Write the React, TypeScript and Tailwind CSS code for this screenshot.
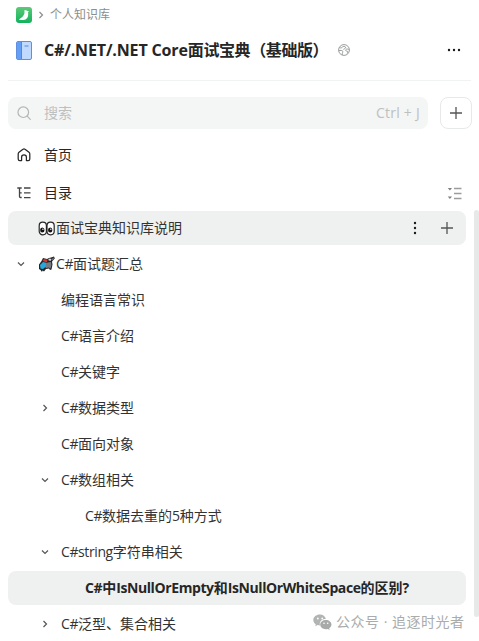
import type { ReactNode } from "react";
import clsx from "clsx";

type TreeItem = {
  label: string;
  level: 0 | 1 | 2;
  icon?: ReactNode;
  state?: "open" | "closed";
  highlighted?: boolean;
  bold?: boolean;
  actions?: boolean;
};

function LogoIcon() {
  return (
    <svg width="16" height="16" viewBox="0 0 16 16">
      <defs>
        <linearGradient id="logo" x1="0" y1="0" x2="0" y2="1">
          <stop offset="0" stopColor="#5cc978" />
          <stop offset="1" stopColor="#12b25d" />
        </linearGradient>
      </defs>
      <rect width="16" height="16" rx="3" fill="url(#logo)" />
      <path
        d="M8.200 3.500C9.300 3 10.800 3.200 11.500 4L13 4.300C12.200 4.800 12 5.300 12.100 6C12.700 9.800 10.700 13 7.300 13C5.600 13 4 12.900 2.800 12.400C5.200 11.300 7.800 8.800 8.400 6.500C8.700 5.300 8.500 4.300 8.200 3.500Z"
        fill="#fff"
      />
    </svg>
  );
}

function BookIcon() {
  return (
    <svg width="16" height="19" viewBox="0 0 16 19">
      <rect x=".5" y=".5" width="15" height="18" rx="1.5" fill="#bfd9ff" stroke="#5f8fdf" />
      <path d="M1 1.5A.5.5 0 0 1 1.5 1H5v17H1.5a.5.5 0 0 1-.5-.5Z" fill="#659ff5" />
      <path d="M5.5 1v17M8.5 5h4" stroke="#5486dc" fill="none" />
    </svg>
  );
}

function GlobeIcon() {
  return (
    <svg width="12" height="12" viewBox="0 0 12 12" fill="none" stroke="#8f9292" strokeWidth=".9">
      <circle cx="6" cy="6" r="5.4" />
      <path d="M1.500 3.700c1.500.4 2.500.2 2.700-.6.3-.8 2.800-1 3.400.1.600 1.200-1.500 1.600-2.200 2.200M11.300 5.800c-1-.9-2.900-1.100-3.500-.2-.5.9.4 1.500 1.200 1.500 1 .1.700 1.300.1 2.300M.8 6.700c1.500-.5 3.500-.4 4 .6.4 1-.9 1.700-.5 3.600" />
    </svg>
  );
}

function SearchIcon() {
  return (
    <svg width="14" height="14" viewBox="0 0 14 14" fill="none" stroke="#b3b6b5" strokeWidth="1.2">
      <circle cx="6.3" cy="6.2" r="5.3" />
      <path d="m10.2 10.2 3.1 3.1" strokeLinecap="round" />
    </svg>
  );
}

function HomeIcon() {
  return (
    <svg width="14" height="14" viewBox="0 0 14 14" fill="none" stroke="#262626" strokeWidth="1.25" strokeLinejoin="round">
      <path d="M1.2 5.9c0-.7.3-1.3.8-1.7L6 1.2c.6-.5 1.4-.5 2 0l4 3c.5.4.8 1 .8 1.7v5c0 .9-.7 1.600-1.600 1.600H9.400V9.200c0-3-4.800-3-4.800 0v3.300H2.800c-.9 0-1.600-.7-1.600-1.600Z" />
    </svg>
  );
}

function CatalogIcon() {
  return (
    <svg width="14" height="12" viewBox="0 0 14 12" fill="none" stroke="#444" strokeWidth="1.3">
      <path d="M.3 1h4.400M2.500 1v8.500q0 1 1 1h1.200M2.500 5.800h2.200M7 1h6.500M7 5.800h6.500M7 10.600h6.500" />
    </svg>
  );
}

function CollapseIcon() {
  return (
    <svg width="15" height="13" viewBox="0 0 15 13">
      <path d="M.8 1h4.200L2.900 3.500ZM.8 9.500h4.200L2.900 12Z" fill="#7d7f7e" />
      <path d="M7 1.500h7.500M7 6.500h7.500M7 11.500h7.500" stroke="#9b9d9c" strokeWidth="1.3" />
    </svg>
  );
}

function PlusIcon() {
  return (
    <svg width="12" height="12" viewBox="0 0 12 12" stroke="#555" strokeWidth="1.3">
      <path d="M6 0v12M0 6h12" />
    </svg>
  );
}

function DotsIcon({ vertical = false }: { vertical?: boolean }) {
  return (
    <svg width="14" height="14" viewBox="0 0 14 14" fill="#1a1a1a" className={clsx(vertical && "rotate-90")}>
      <circle cx="2" cy="7" r="1.2" />
      <circle cx="7" cy="7" r="1.2" />
      <circle cx="12" cy="7" r="1.2" />
    </svg>
  );
}

function Chevron({ open = false, className = "text-[#555]" }: { open?: boolean; className?: string }) {
  return (
    <svg
      width="8"
      height="8"
      viewBox="0 0 8 8"
      fill="none"
      stroke="currentColor"
      strokeWidth="1.2"
      className={className}
    >
      <path d={open ? "M1 2.5 4 5.5 7 2.5" : "M2.5 1 5.5 4 2.5 7"} />
    </svg>
  );
}

function EyesIcon() {
  return (
    <svg width="18" height="16" viewBox="0 0 18 16">
      <g fill="#fff" stroke="#252525" strokeWidth="1.2">
        <rect x="1.200" y="2.200" width="7.200" height="12.600" rx="3.500" />
        <rect x="9" y="2.200" width="7.200" height="12.600" rx="3.500" />
      </g>
      <ellipse cx="4.300" cy="10" rx="2.200" ry="2.600" fill="#111" />
      <ellipse cx="12.200" cy="10" rx="2.200" ry="2.600" fill="#111" />
      <circle cx="4.900" cy="9.200" r=".7" fill="#fff" />
      <circle cx="12.800" cy="9.200" r=".7" fill="#fff" />
    </svg>
  );
}

// Caped hero flying towards the top right
function HeroIcon() {
  return (
    <svg width="18" height="17" viewBox="0 0 18 17">
      <path d="M1 8.500 3.500 5 5 2l4 1 2-1 2-.5L16 .5l.8 2L14 5.500l.5 3-1 5-1.500.5-1-1.500-3 .5L6 15.500l-1.500-1L4 16l-1.500-2L1 13Z" fill="#252525" />
      <path d="m2 9 3-3 4 1-1 3.500L5 13l-2.500-.5Z" fill="#24a9dd" />
      <path d="m4.500 5 1.500-2 3.500.8L9 6.500Z" fill="#d8342f" />
      <path d="m7.500 9.500 2-3L13 6l.5 3-1 3.500-2-1-3 .7Z" fill="#747b82" />
      <path d="m10 4 1.500-1.500 2 .5-1 2Z" fill="#d9dcdf" />
      <path d="m13.500 3.500 2-2 .4 1-1.700 2Z" fill="#747b82" />
    </svg>
  );
}

function WechatIcon() {
  return (
    <svg width="19" height="16" viewBox="0 0 19 16">
      <path d="M7 .5C3.200.5.3 2.900.3 6c0 1.800 1 3.300 2.500 4.300L2.200 12.300l2.400-1.200c.8.2 1.500.3 2.400.3C6 7.700 9 5 12.900 5.100 12.300 2.400 9.900.5 7 .5Z" fill="#b2b4b3" />
      <path d="M12.900 5.900c-3.200 0-5.700 2.100-5.700 4.700s2.500 4.700 5.700 4.700c.7 0 1.300-.1 1.900-.3l1.900 1-.5-1.700c1.500-.9 2.300-2.200 2.300-3.700 0-2.600-2.500-4.700-5.600-4.700Z" fill="#a8aaa9" />
      <g fill="#fff">
        <circle cx="4.8" cy="4.5" r=".9" />
        <circle cx="9.2" cy="4.5" r=".9" />
        <circle cx="11" cy="9.2" r=".8" />
        <circle cx="14.7" cy="9.2" r=".8" />
      </g>
    </svg>
  );
}

// Latin runs take their own letter spacing, apart from the Chinese text around them
function MixedText({ text, latin = "tracking-[-0.4px]" }: { text: string; latin?: string }) {
  return text.split(/([ -~]+)/).filter(Boolean).map((part, i) =>
    /^[ -~]/.test(part) ? (
      <span key={i} className={latin}>
        {part}
      </span>
    ) : (
      part
    ),
  );
}

const items: TreeItem[] = [
  { label: "面试宝典知识库说明", level: 0, icon: <EyesIcon />, highlighted: true, actions: true },
  { label: "C#面试题汇总", level: 0, icon: <HeroIcon />, state: "open" },
  { label: "编程语言常识", level: 1 },
  { label: "C#语言介绍", level: 1 },
  { label: "C#关键字", level: 1 },
  { label: "C#数据类型", level: 1, state: "closed" },
  { label: "C#面向对象", level: 1 },
  { label: "C#数组相关", level: 1, state: "open" },
  { label: "C#数据去重的5种方式", level: 2 },
  { label: "C#string字符串相关", level: 1, state: "open" },
  { label: "C#中IsNullOrEmpty和IsNullOrWhiteSpace的区别?", level: 2, highlighted: true, bold: true },
  { label: "C#泛型、集合相关", level: 1, state: "closed" },
];

const indents = ["pl-[9px]", "pl-[33px]", "pl-[57px]"];

function TreeRow({ item }: { item: TreeItem }) {
  return (
    <li className="flex h-9 items-center">
      <div
        className={clsx(
          "flex h-[34px] w-[458px] items-center rounded-lg",
          indents[item.level],
          item.highlighted && "bg-[#eff1f0]",
        )}
      >
        <span className="w-5 shrink-0">{item.state && <Chevron open={item.state === "open"} />}</span>
        {item.icon && <span className="-mr-px ml-px">{item.icon}</span>}
        <span
          className={clsx(
            "whitespace-nowrap text-sm",
            item.icon && "ml-px",
            item.bold ? "font-bold text-[#262626]" : "text-[#333]",
          )}
        >
          <MixedText text={item.label} />
        </span>
        {item.actions && (
          <span className="ml-auto flex items-center gap-[19px] pr-[13px]">
            <DotsIcon vertical />
            <PlusIcon />
          </span>
        )}
      </div>
    </li>
  );
}

export default function App() {
  return (
    <div className="relative h-[641px] w-[479px] overflow-hidden bg-white font-['Open_Sans','Noto_Sans_CJK_SC',sans-serif] text-[#262626]">
      <header className="mx-2 h-[81px] border-b border-[#f1f2f2] px-2">
        <nav className="flex h-[30px] items-center">
          <LogoIcon />
          <Chevron className="ml-[5px] text-[#8a8f8d]" />
          <span className="ml-[5px] text-xs text-[#8a8f8d]">个人知识库</span>
        </nav>
        <div className="flex h-10 items-center">
          <BookIcon />
          <h1 className="ml-3 w-[294px] whitespace-nowrap text-base font-bold tracking-[-0.4px]">
            <MixedText text="C#/.NET/.NET Core面试宝典（基础版）" latin="tracking-[-0.15px]" />
          </h1>
          <GlobeIcon />
          <button className="ml-auto mr-[2px]">
            <DotsIcon />
          </button>
        </div>
      </header>

      <div className="mt-4 flex gap-3 pl-2">
        <div className="flex h-8 w-[420px] shrink-0 items-center rounded-lg bg-[#f4f5f5] pl-[9px] pr-2 text-sm text-[#bec0bf]">
          <SearchIcon />
          <span className="ml-[13px]">搜索</span>
          <span className="ml-auto tracking-[0.25px]">Ctrl + J</span>
        </div>
        <button className="flex size-8 shrink-0 items-center justify-center rounded-lg border border-[#e7e9e8]">
          <PlusIcon />
        </button>
      </div>

      <div className="mt-[7px] flex h-[38px] items-center gap-[13px] pl-[17px] text-sm">
        <HomeIcon />
        首页
      </div>
      <div className="flex h-9 items-center gap-[13px] pl-[17px] pr-[17px] pt-0.5 text-sm">
        <CatalogIcon />
        目录
        <span className="ml-auto">
          <CollapseIcon />
        </span>
      </div>

      <ul className="px-2">
        {items.map((item) => (
          <TreeRow key={item.label} item={item} />
        ))}
      </ul>

      <div className="absolute right-0 top-[210px] h-[407px] w-[5px] rounded-t-sm rounded-b-sm bg-[#e7e9e8]" />
      <div className="absolute left-[313px] top-[612px] flex h-5 items-center gap-1 whitespace-nowrap text-sm text-[#aaacab]">
        <WechatIcon />
        <span className="tracking-[0.5px]">公众号 · 追逐时光者</span>
      </div>
    </div>
  );
}
